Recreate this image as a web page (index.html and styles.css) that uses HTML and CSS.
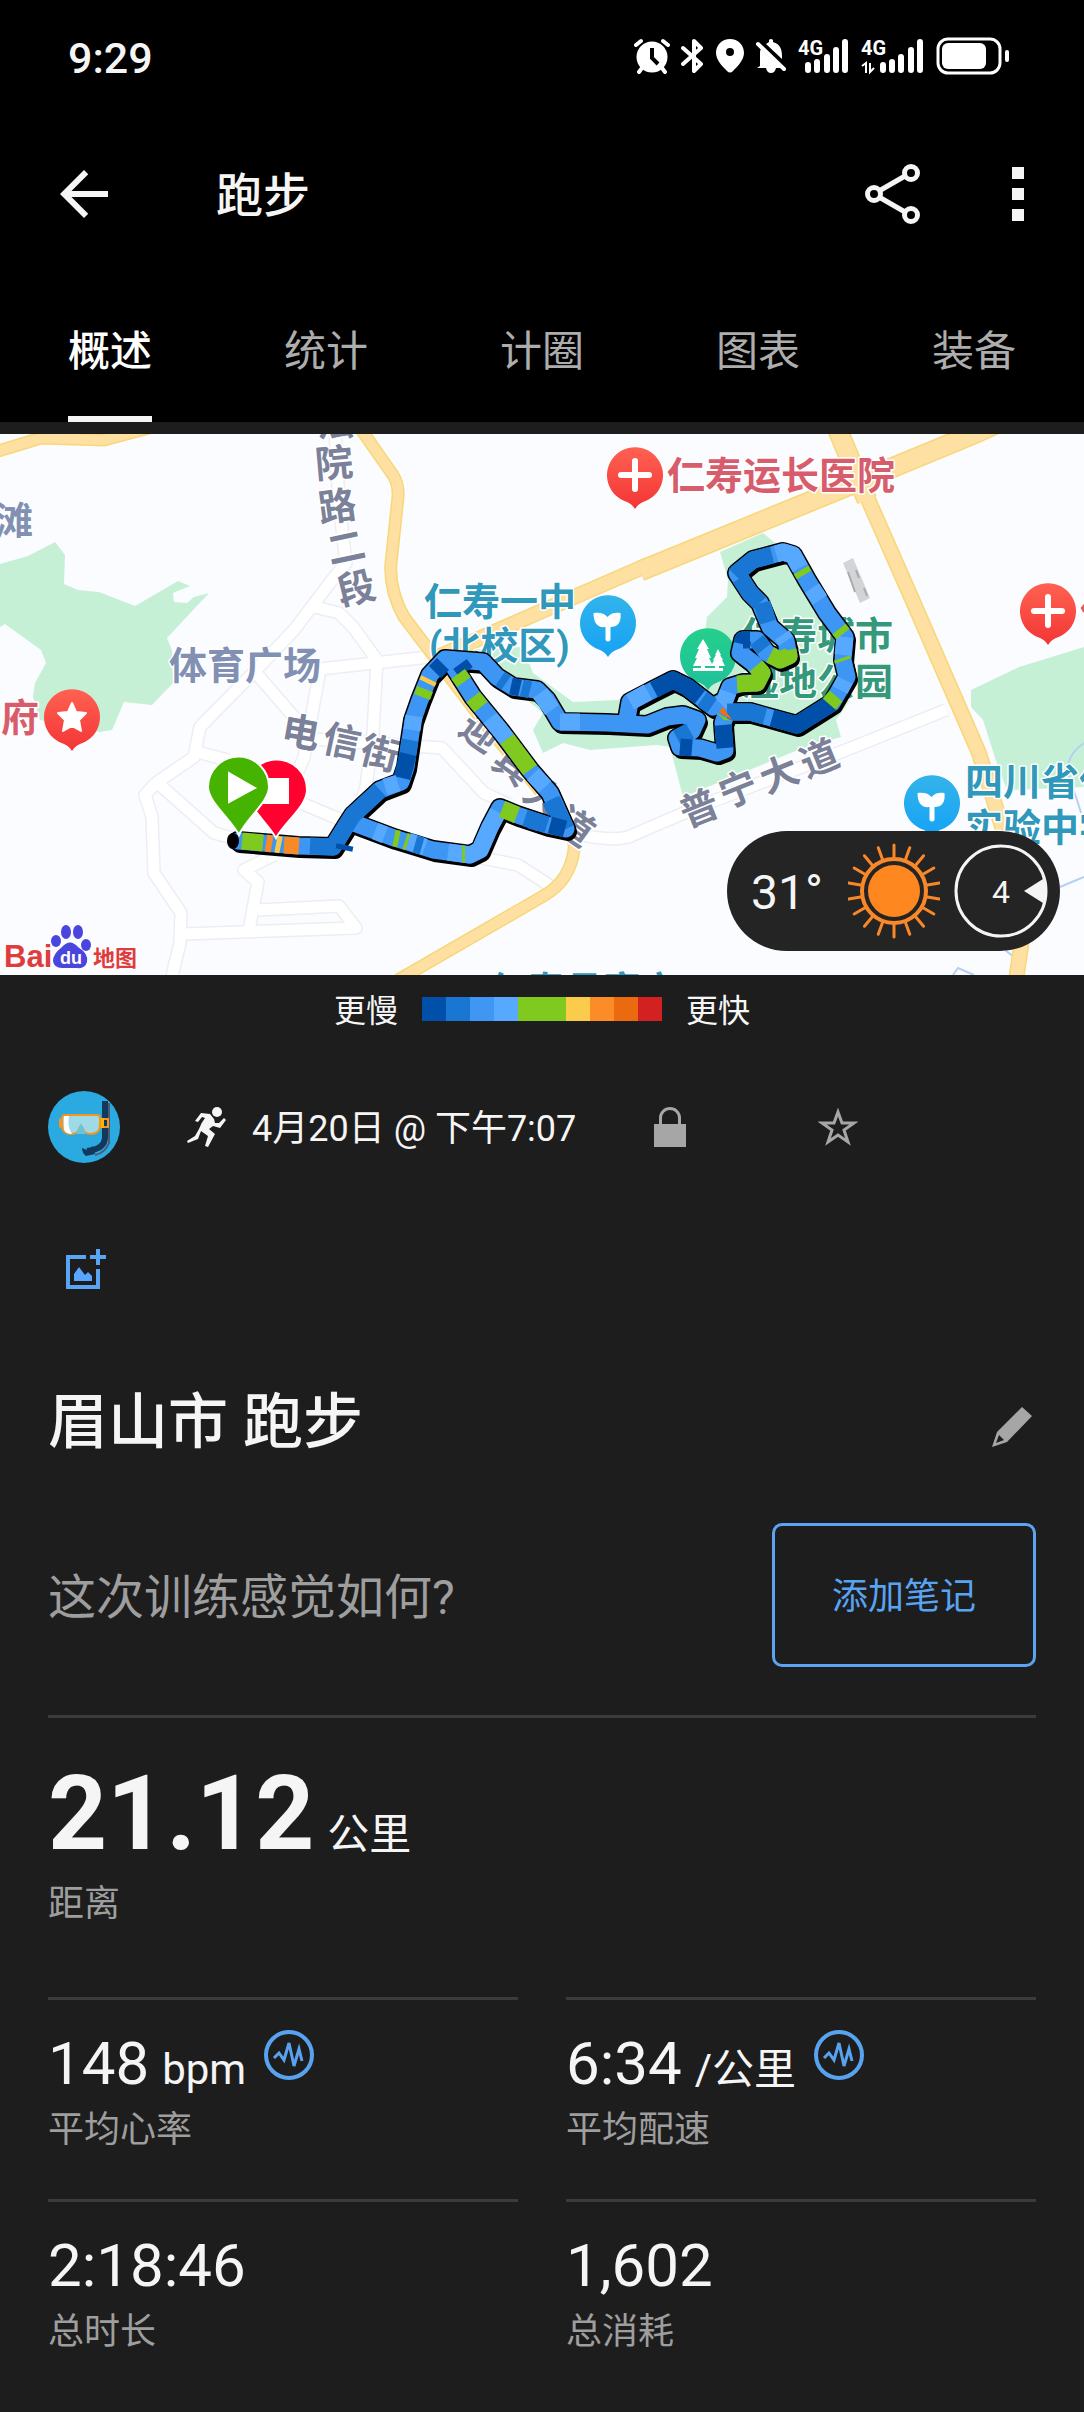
FILE: index.html
```html
<!DOCTYPE html>
<html lang="zh-CN">
<head>
<meta charset="utf-8">
<meta name="viewport" content="width=device-width, initial-scale=1">
<title>跑步</title>
<link rel="stylesheet" href="styles.css">
</head>
<body>
<div class="top">
  <div class="status-bar">
    <span class="clock">9:29</span>
    <div class="status-icons">
      <svg width="36" height="36" viewBox="0 0 36 36"><g fill="none" stroke="#fff" stroke-width="4" stroke-linecap="round"><path d="M2 7l5-4M34 7l-5-4M8 30l-3 4M28 30l3 4"/></g><circle cx="18" cy="19" r="15.500" fill="#fff"/><path d="M18 10v10l6 6" fill="none" stroke="#000" stroke-width="4"/></svg>
      <svg width="24" height="36" viewBox="0 0 24 36"><path d="M2 10l18 16-7 7V3l7 7L2 26" fill="none" stroke="#fff" stroke-width="4" stroke-linejoin="round" stroke-linecap="round"/></svg>
      <svg width="28" height="36" viewBox="0 0 28 36"><path fill="#fff" fill-rule="evenodd" d="M14 1C6 1 0 7 0 15c0 7 7 14 11 18q3 3 6 0c4-4 11-11 11-18C28 7 22 1 14 1zm0 9a4 4 0 110 8 4 4 0 010-8z"/></svg>
      <svg width="32" height="36" viewBox="0 0 32 36"><path fill="#fff" d="M5 28V16c0-2 0-4 1-5l19 18v1H2zM11 30h10q-1 5-5 5t-5-5zM11 6l3-2V2q2-2 4 0v2c7 2 9 7 9 14v3z"/><path d="M3 6l26 25" stroke="#fff" stroke-width="4" stroke-linecap="round"/></svg>
      <svg width="52" height="48" viewBox="0 -6 52 48"><text class="net" x="0" y="17">4G</text><path class="bars" d="M10 27v5M19 24v8M29 19v13M38 12v20M47 4v28"/></svg>
      <svg width="64" height="48" viewBox="0 -6 64 48"><text class="net" x="0" y="17">4G</text><path d="M1 28l4-3v10M9 25v9l4-4" fill="none" stroke="#fff" stroke-width="2"/><path class="bars" d="M22 27v5M31 24v8M40 19v13M50 12v20M59 4v28"/></svg>
      <svg width="74" height="38" viewBox="0 0 74 38"><rect x="2" y="2" width="62" height="34" rx="10" fill="none" stroke="#fff" stroke-width="3"/><rect x="6" y="6" width="44" height="26" rx="6" fill="#fff"/><rect x="69" y="13" width="4" height="12" rx="2" fill="#fff"/></svg>
    </div>
  </div>
  <header class="app-bar">
    <button class="icon-button" type="button" aria-label="返回"><svg width="72" height="72" viewBox="0 0 24 24"><path fill="#f5f5f5" d="M20 11H7.830l5.590-5.590L12 4l-8 8 8 8 1.410-1.410L7.830 13H20z"/></svg></button>
    <h1>跑步</h1>
    <button class="icon-button" type="button" aria-label="分享"><svg width="62" height="62" viewBox="0 0 62 62"><g fill="none" stroke="#f5f5f5" stroke-width="5"><path d="M17 28L43 13M17 34l26 15"/><circle cx="49" cy="10" r="6.500"/><circle cx="12" cy="31" r="6.500"/><circle cx="49" cy="52" r="6.500"/></g></svg></button>
    <button class="icon-button more" type="button" aria-label="更多"><svg width="12" height="54" viewBox="0 0 12 54"><path fill="#f5f5f5" d="M0 0h12v12H0zM0 21h12v12H0zM0 42h12v12H0z"/></svg></button>
  </header>
  <nav class="tabs">
    <a class="tab active" href="#overview" aria-current="page">概述</a>
    <a class="tab" href="#stats">统计</a>
    <a class="tab" href="#laps">计圈</a>
    <a class="tab" href="#charts">图表</a>
    <a class="tab" href="#gear">装备</a>
  </nav>
</div>

<main id="overview">
  <section class="map" aria-label="路线地图">
    <svg class="map-canvas" viewBox="0 434 1084 541">
      <defs>
        <linearGradient id="red" x1="0" y1="0" x2="0" y2="1"><stop offset="0" stop-color="#ff6152"/><stop offset="1" stop-color="#f33535"/></linearGradient>
        <linearGradient id="blue" x1="0" y1="0" x2="0" y2="1"><stop offset="0" stop-color="#33b3ea"/><stop offset="1" stop-color="#15a3f5"/></linearGradient>
        <linearGradient id="green" x1="0" y1="0" x2="0" y2="1"><stop offset="0" stop-color="#25cf8c"/><stop offset="1" stop-color="#1fc09a"/></linearGradient>
        <path id="pin" d="M0 34q-3-5-8-7A28 28 0 1 1 8 27q-5 2-8 7z"/>
        <path id="sprout" d="M-2.500 17V4c-8 1-12-4-12-14 6-1 11 0 14 4 3-4 8-5 13-4 1 10-3 14-10 14v13q-2.500 3-5 0z" fill="#fff"/>
        <path id="cross" d="M0-14V14M-14 0H14" stroke="#fff" stroke-width="6" stroke-linecap="round"/>
        <!-- local streets -->
        <g id="streets">
          <path d="M335 430L339 503 346 563 332 580 294 630 256 670 200 727 194 757 156 783 145 795 152 817 154 873 181 913 180 943 171 980"/>
          <path d="M315 607L339 613 353 627 377 660M320 669L429 657M320 670L304 757 290 790M377 660L373 733 366 787 358 812"/>
          <path d="M256 673L294 717M197 752L228 760M160 785L214 833 240 840M301 803L346 822M300 738L442 748 484 793 510 805"/>
          <path d="M274 855L244 870 258 882 249 930M258 910L339 906 356 928 184 934M477 857L518 865 552 887"/>
          <path d="M573 833Q610 842 628 837L698 807 846 750 946 710"/>
        </g>
        <!-- main roads -->
        <path id="main-a" d="M-5 452L41 438 104 440 149 428M360 428L393 475Q399 485 398 497L391 563Q389 590 404 617L429 650 490 730 560 815Q576 835 574 850 570 880 545 895L398 980"/>
        <path id="main-b" d="M440 656L542 611 650 564M867 497L908 590 979 753 1002 827Q1024 900 1021 947L1016 980"/>
        <path id="main-c" d="M640 571L694 549 843 488 974 434 1000 422M837 428L867 500"/>
        <!-- recorded track -->
        <g id="track">
          <path d="M238 841L298 846 333 847 346 826 353 815 380 790 401 782 406 767 413 720 420 700 430 675 445 659 483 662 497 677 513 687 537 690 547 700 560 722 607 723 647 725 667 717 683 715 697 720 692 731 677 738 680 747 700 748 717 753 725 750 723 723 727 712"/>
          <path d="M627 719L630 702 653 690 673 680 687 687 713 707 725 700 730 687 743 683 757 683 762 673 753 663 740 653 743 640 757 640 767 653 780 660 789 656 786 641 770 627 760 603 750 593 737 573 753 560 783 552 793 555 807 580 827 613 845 637 843 660 847 677 832 703 797 725 750 712 727 712"/>
          <path d="M452 664L473 697 500 730 530 770 550 793 566 829 547 825 517 815 500 808 490 827 480 850 470 855 433 850 394 838 354 823"/>
        </g>
      </defs>
      <rect y="434" width="1084" height="541" fill="#fbfcff"/>
      <g fill="#c6f0d6">
        <path d="M0 564L28 556 55 542 65 555 64 584 78 590 99 592 135 606 178 581 190 586 173 593 174 602 187 603 194 597 209 593 167 638 172 650 173 683 152 705 124 702 112 730 100 732 40 720 33 697 35 683 46 663 41 650 5 624 0 627z"/>
        <path d="M720 552L763 533 780 547 850 640 850 700 836 720 841 737 798 750 683 797 670 747 657 745 590 750 563 743 543 753 533 730 543 713 527 700 500 690 460 650 523 647 533 673 573 702 617 700 683 687 700 670 707 617 727 597 728 580z"/>
        <path d="M1084 647L1019 667 971 690 971 707 983 720 998 767 1007 790 1084 787z"/>
      </g>
      <path d="M1084 743Q1062 758 1070 780T1081 813M1060 887L1084 877M953 975L958 968 974 975M1005 950L1014 957" fill="none" stroke="#b4d0f0" stroke-width="2"/>
      <use href="#streets" fill="none" stroke="#eceef2" stroke-width="14" stroke-linejoin="round"/>
      <use href="#streets" fill="none" stroke="#fff" stroke-width="11" stroke-linejoin="round"/>
      <g fill="none" stroke="#f8d778"><use href="#main-a" stroke-width="13"/><use href="#main-b" stroke-width="16"/><use href="#main-c" stroke-width="21"/></g>
      <g fill="none" stroke="#fde0a2"><use href="#main-a" stroke-width="10"/><use href="#main-b" stroke-width="13"/><use href="#main-c" stroke-width="18"/></g>
      <path d="M843 563L853 558 870 598 860 603z" fill="#d3d4d6"/><path d="M856 570l3 8M848 572l7 20M864 588l3 8" stroke="#a9aaad" stroke-width="2"/>

      <g class="road-label">
        <text transform="translate(335 422) rotate(-3)" y="14">法</text>
        <text transform="translate(334 463) rotate(-5)" y="14">院</text>
        <text transform="translate(337 506) rotate(-8)" y="14">路</text>
        <text transform="translate(346 547) rotate(-12)" y="14">二</text>
        <text transform="translate(356 588) rotate(-14)" y="14">段</text>
        <text transform="translate(301 732) rotate(10)" y="14">电</text>
        <text transform="translate(342 741) rotate(12)" y="14">信</text>
        <text transform="translate(380 753) rotate(14)" y="14">街</text>
        <text transform="translate(480 732) rotate(36)" y="14">迎</text>
        <text transform="translate(513 765) rotate(36)" y="14">宾</text>
        <text transform="translate(544 797) rotate(36)" y="14">大</text>
        <text transform="translate(575 826) rotate(36)" y="14">道</text>
        <text transform="translate(699 808) rotate(-22)" y="14">普</text>
        <text transform="translate(738 789) rotate(-22)" y="14">宁</text>
        <text transform="translate(779 774) rotate(-22)" y="14">大</text>
        <text transform="translate(819 758) rotate(-22)" y="14">道</text>
      </g>
      <g class="place">
        <text class="district" x="-5" y="534">滩</text>
        <text class="district" x="169" y="679">体育广场</text>
        <text class="hospital" x="667" y="489">仁寿运长医院</text>
        <text class="hospital" x="1080" y="625">仁</text>
        <text class="hospital" x="-37" y="731">政府</text>
        <text class="school" x="424" y="615">仁寿一中</text>
        <text class="school" x="429" y="659">(北校区)</text>
        <text class="school" x="965" y="795">四川省仁</text>
        <text class="school" x="965" y="841">实验中学</text>
        <text class="school" x="489" y="1004">仁寿县富市</text>
        <text class="park" x="741" y="649">仁寿城市</text>
        <text class="park" x="741" y="695">湿地公园</text>
      </g>
      <g transform="translate(635 475)"><use href="#pin" fill="url(#red)"/><use href="#cross"/></g>
      <g transform="translate(1048 611)"><use href="#pin" fill="url(#red)"/><use href="#cross"/></g>
      <g transform="translate(72 717)"><use href="#pin" fill="url(#red)"/><path fill="#fff" stroke="#fff" stroke-width="2" stroke-linejoin="round" d="M0-14L4-5 14-4 7 3 9 14 0 9-9 14-7 3-14-4-4-5z"/></g>
      <g transform="translate(608 623)"><use href="#pin" fill="url(#blue)"/><use href="#sprout"/></g>
      <g transform="translate(932 803)"><use href="#pin" fill="url(#blue)"/><use href="#sprout"/></g>
      <g transform="translate(708 656)"><use href="#pin" fill="url(#green)"/><path fill="#fff" d="M-5-17L1-7H-1L3 2H1L5 10H-3V12H7V10H3L6 4H5L8-1H7L10-7 13-1H12L15 4H14L17 10H11V12H15V15H-15V12H-7V10H-15L-11 2H-13L-9-7H-11z"/></g>

      <use href="#track" class="casing" stroke-width="20"/>
      <use href="#track" class="shadow" stroke-width="18" transform="translate(2 3)"/>
      <use href="#track" class="pace" stroke="#3d95f4" stroke-width="17"/>
      <g class="pace-parts">
        <path class="p2" d="M310 846L333 847 346 826 353 815 380 790M405 770L410 740M735 575L737 573 753 560 772 555M760 603L750 593 740 578M768 622L762 603M566 829L552 800M547 825L525 818M690 731L677 738M757 640L764 649"/>
        <path class="p1" d="M402 778L408 754M435 672L443 664M460 664L466 672M654 690L673 680 687 687 700 697M680 747L692 748M723 725L725 748M742 644L743 640 750 640M832 703L797 725 772 718M565 829L550 825M511 686L520 688M345 845L344 850"/>
        <path class="p3" d="M385 787L398 783M412 730L414 716M540 693L552 710M560 722L580 722M630 702L648 692M776 554L783 552 793 555 800 568M812 588L820 600M845 637L843 655M845 680L840 690M786 641L782 635M490 718L507 739M533 774L545 787M498 812L490 827 480 850 470 855 448 852M385 835L375 831M721 704L725 700 728 692M408 841L425 847"/>
        <path class="p2" d="M500 679L506 683M522 688L530 690M727 712L750 712 765 716M712 706L702 699M415 844L422 846M540 823L530 820M550 800L556 812"/>
        <path class="pg" d="M242 841L263 843M422 697L425 689M458 674L464 682M473 697L481 707M507 739L530 770M502 809L517 815M737 684L757 683 762 673 756 666M770 655L780 660 789 656 788 650M801 570L804 575M839 629L843 634M842 658L843 661M836 696L829 704M394 838L399 839M405 841L408 842M462 854L465 854"/>
        <path class="py" d="M427 683L429 679M276 844L281 845"/>
        <path class="po" d="M266 843L272 844M284 845L299 846"/>
      </g>
      <path d="M719 712L723 707 732 720z" fill="#f06f12"/><path d="M717 713L732 721 724 720z" fill="#80c91f"/>
      <ellipse cx="233" cy="841" rx="6" ry="8"/>
      <g stroke="#fff" stroke-width="2">
        <path fill="#ff0230" d="M276 838C268 823 246 806 246 790a30 30 0 1 1 61 0C307 806 284 823 276 838z"/>
        <path fill="#fff" d="M263 779h25v24h-25z"/>
        <path fill="#45b300" d="M239 835C231 819 208 802 208 787a30 30 0 1 1 61 0C269 802 246 819 239 835z"/>
        <path fill="#fff" d="M229 773L255 788 229 802z"/>
      </g>
      <g class="brand">
        <text x="4" y="967" font-size="31">Bai</text>
        <g fill="#4a45dc"><ellipse cx="56" cy="941" rx="5" ry="6"/><ellipse cx="66" cy="932" rx="5" ry="7"/><ellipse cx="78" cy="932" rx="5" ry="7"/><ellipse cx="86" cy="945" rx="5" ry="6"/><path d="M62 947q8-9 16 0 11 7 9 15-2 7-10 6H62q-8 0-9-7 0-7 9-14z"/></g>
        <text class="du" x="60" y="964" font-size="18">du</text>
        <text class="brand-cn" x="93" y="966" font-size="22">地图</text>
      </g>
    </svg>
    <div class="weather">
      <span class="temp">31°</span>
      <svg class="sun" width="92" height="96" viewBox="-46 -48 92 96"><circle r="26" fill="#ff871f"/><circle r="32" fill="none" stroke="#f98829" stroke-width="4"/><g stroke="#f98829" stroke-width="3" stroke-linecap="round"><path id="ray" d="M0-34V-46M0 34V46"/><use href="#ray" transform="rotate(20)"/><use href="#ray" transform="rotate(40)"/><use href="#ray" transform="rotate(60)"/><use href="#ray" transform="rotate(80)"/><use href="#ray" transform="rotate(100)"/><use href="#ray" transform="rotate(120)"/><use href="#ray" transform="rotate(140)"/><use href="#ray" transform="rotate(160)"/></g></svg>
      <svg width="94" height="94" viewBox="-47 -47 94 94"><circle r="45" fill="none" stroke="#f5f5f5" stroke-width="3"/><path fill="#f5f5f5" d="M23 0L42-12 46 0 42 12z"/><text class="wind" x="0" y="12">4</text></svg>
    </div>
  </section>

  <div class="legend">
    <span>更慢</span>
    <div class="scale"><i class="s1"></i><i class="s2"></i><i class="s3"></i><i class="s4"></i><i class="s5"></i><i class="s5"></i><i class="s6"></i><i class="s7"></i><i class="s8"></i><i class="s9"></i></div>
    <span>更快</span>
  </div>

  <div class="content">
    <div class="meta">
      <svg width="72" height="72" viewBox="0 0 72 72"><circle cx="36" cy="36" r="36" fill="#2baae2"/><path d="M57 10v36q0 12-18 14" fill="none" stroke="#12395c" stroke-width="6"/><path d="M61 12v40q-4 10-14 12" fill="none" stroke="#4c5a70" stroke-width="2"/><path d="M34 57l5 2 6-4 2 8-9 2q-4-3-4-8z" fill="#12395c"/><path d="M50 28h10v8H50" fill="none" stroke="#f7941d" stroke-width="2"/><rect x="11" y="27" width="5" height="10" rx="2" fill="#f7941d"/><rect x="51" y="27" width="5" height="10" fill="#ffb400"/><path d="M17 24h32q3 0 3 4v6q0 9-10 9-5 0-7-5-1-3-2-3t-2 3q-2 5-7 5-10 0-10-9v-6q0-4 3-4z" fill="#9fdbe6" stroke="#f7941d" stroke-width="2"/><path d="M20 25h-4v14q2 4 8 4-5-7-3-18z" fill="#fff"/><path d="M33 32l-5 11h10z" fill="#68c5dc"/></svg>
      <svg class="runner" width="40" height="42" viewBox="0 0 40 42"><circle cx="31" cy="6" r="5" fill="#f5f5f5"/><path fill="#f5f5f5" d="M15 7L24 8 28 13 29 17 33 17 38 12 40 14 34 22 27 20 23 23 29 28 22 41 19 40 22 30 15 25 12 33 2 37 1 35 9 30 13 23Q15 17 19 12L16 11 12 16 9 15z"/></svg>
      <span class="date">4月20日 @ 下午7:07</span>
      <svg class="lock" width="32" height="40" viewBox="0 0 32 40"><path fill="#a6a6a6" d="M0 17h5v-6a11 11 0 0122 0v6h5v23H0zM8 17h16v-6a8 8 0 00-16 0z" fill-rule="evenodd"/></svg>
      <button class="icon-button" type="button" aria-label="收藏"><svg width="40" height="40" viewBox="0 0 40 40"><path d="M20 5L24 16H36L26 23 30 35 20 28 10 35 14 23 4 16H16z" fill="none" stroke="#a6a6a6" stroke-width="3"/></svg></button>
    </div>

    <button class="icon-button add-photo" type="button" aria-label="添加照片"><svg width="40" height="40" viewBox="0 0 40 40"><path fill="none" stroke="#58a5f5" stroke-width="4" d="M20 8H2V38H32V20M32 0V16M24 8H40"/><path fill="#58a6ff" d="M8 32V25L13 18 19 26 22 23 26 27V32z"/></svg></button>

    <div class="title-row">
      <h2>眉山市 跑步</h2>
      <button class="icon-button" type="button" aria-label="编辑"><svg width="42" height="42" viewBox="0 0 42 42"><path fill="#a6a6a6" fill-rule="evenodd" d="M31 1L41 10 16 36 1 41 6 26zM8 29L5 37 13 34z"/></svg></button>
    </div>

    <div class="feel-row">
      <p>这次训练感觉如何?</p>
      <button class="note" type="button">添加笔记</button>
    </div>

    <div class="distance">
      <div class="distance-value">21.12<span class="unit">公里</span></div>
      <div class="label">距离</div>
    </div>

    <div class="stats">
      <div class="stat">
        <div class="value">148<span class="unit">bpm</span><svg class="pulse" width="50" height="50" viewBox="0 0 50 50"><circle cx="25" cy="25" r="23" fill="none" stroke="#58a3ef" stroke-width="4"/><path id="wave" d="M10 28L15 23 20 30 25 13 30 36 35 19 38 31" fill="none" stroke="#58a3ef" stroke-width="3"/></svg></div>
        <div class="label">平均心率</div>
      </div>
      <div class="stat">
        <div class="value">6:34<span class="unit">/公里</span><svg class="pulse" width="50" height="50" viewBox="0 0 50 50"><circle cx="25" cy="25" r="23" fill="none" stroke="#58a3ef" stroke-width="4"/><use href="#wave"/></svg></div>
        <div class="label">平均配速</div>
      </div>
      <div class="stat">
        <div class="value">2:18:46</div>
        <div class="label">总时长</div>
      </div>
      <div class="stat">
        <div class="value">1,602</div>
        <div class="label">总消耗</div>
      </div>
    </div>
  </div>
</main>
</body>
</html>
```
FILE: styles.css
```css
* { box-sizing: border-box; }

body {
  margin: 0;
  background: #1d1d1d;
  color: #f5f5f5;
  font-family: Roboto, "Noto Sans CJK SC", sans-serif;
}

h1, h2, p { margin: 0; }
svg { display: block; flex: none; }

.icon-button {
  display: block;
  padding: 0;
  border: 0;
  background: none;
}

/* Status bar, title bar and tabs */
.top { background: #000; }

.status-bar {
  display: flex;
  align-items: center;
  justify-content: space-between;
  height: 112px;
  padding: 0 74px 0 68px;
}

.clock { padding-top: 3px; font-size: 43px; font-weight: 500; line-height: 48px; }

.status-icons { display: flex; align-items: center; gap: 11px; }
.net { font-size: 20px; font-weight: 700; fill: #fff; }
.bars { fill: none; stroke: #fff; stroke-width: 6px; stroke-linecap: round; }

.app-bar {
  display: flex;
  align-items: center;
  height: 160px;
  padding: 4px 60px 0 48px;
}

.app-bar h1 {
  flex: 1;
  margin-left: 96px;
  padding-top: 4px;
  font-size: 47px;
  font-weight: 500;
  line-height: 72px;
}

.more { margin-left: 88px; }

.tabs {
  display: flex;
  height: 150px;
  padding: 0 2px;
}

.tab {
  position: relative;
  flex: 1;
  padding-top: 50px;
  color: #adadad;
  font-size: 42px;
  line-height: 60px;
  text-align: center;
  text-decoration: none;
}

.tab.active { color: #fff; font-weight: 500; }

.tab.active::after {
  content: "";
  position: absolute;
  bottom: 0;
  left: 50%;
  width: 84px;
  height: 6px;
  margin-left: -42px;
  background: #f5f5f5;
}

/* Map */
.map { position: relative; margin-top: 12px; }
.map-canvas { width: 100%; height: auto; }

.road-label { fill: #7a8199; text-anchor: middle; }
.road-label, .place {
  font-size: 38px;
  font-weight: 700;
  stroke: #fff;
  stroke-width: 3px;
  stroke-linejoin: round;
  paint-order: stroke;
}
.district { fill: #8291b3; }
.hospital { fill: #d85d6c; }
.school { fill: #2f98bb; }
.park { fill: #34987a; }

.casing, .shadow, .pace { fill: none; stroke-linejoin: round; stroke-linecap: round; }
.casing, .shadow { stroke: #000; }
.pace-parts { fill: none; stroke-width: 17px; stroke-linejoin: round; }
.p1 { stroke: #004fa8; }
.p2 { stroke: #1976d2; }
.p3 { stroke: #57a8ff; }
.pg { stroke: #80c91f; }
.py { stroke: #fbc94a; }
.po { stroke: #f58a28; }

.brand { fill: #e03c3c; font-family: "Liberation Sans", sans-serif; font-weight: 700; }
.brand .du { fill: #fff; }
.brand .brand-cn { font-family: "Noto Sans CJK SC", sans-serif; }

.weather {
  position: absolute;
  right: 24px;
  bottom: 24px;
  display: flex;
  align-items: center;
  width: 333px;
  height: 120px;
  padding: 0 12px 0 24px;
  border-radius: 60px;
  background: #242424;
}

.temp { padding-top: 4px; font-size: 48px; line-height: 56px; }
.sun { margin: 0 14px 0 auto; }
.wind { fill: #f5f5f5; font-size: 32px; text-anchor: middle; }

.legend {
  display: flex;
  align-items: center;
  justify-content: center;
  gap: 24px;
  height: 68px;
  font-size: 32px;
  line-height: 48px;
}

.legend span { padding-top: 3px; }

.scale { display: flex; }
.scale i { width: 24px; height: 24px; }
.s1 { background: #004fa8; }
.s2 { background: #1976d2; }
.s3 { background: #3f97f3; }
.s4 { background: #57a8ff; }
.s5 { background: #80c91f; }
.s6 { background: #fbcb4c; }
.s7 { background: #fb8c28; }
.s8 { background: #eb6a10; }
.s9 { background: #d32121; }

/* Activity details */
.content { padding: 48px; }

.meta { display: flex; align-items: center; height: 72px; }
.runner { margin-left: 66px; }
.date { margin-left: 26px; padding-top: 4px; font-size: 36px; line-height: 48px; }
.lock { margin: 0 132px 0 78px; }

.add-photo { margin: 86px 18px 0; }

.title-row {
  display: flex;
  align-items: center;
  justify-content: space-between;
  height: 84px;
  margin-top: 96px;
  padding-right: 3px;
}

.title-row h2 { padding-bottom: 8px; font-size: 60px; font-weight: 500; line-height: 72px; }

.feel-row {
  display: flex;
  align-items: center;
  justify-content: space-between;
  margin-top: 54px;
}

.feel-row p { padding-top: 5px; color: #9e9e9e; font-size: 48px; line-height: 72px; }

.note {
  width: 264px;
  height: 144px;
  padding: 0 0 4px;
  border: 3px solid #5ba4f2;
  border-radius: 10px;
  background: none;
  color: #58a3f2;
  font: inherit;
  font-size: 36px;
}

.distance {
  height: 282px;
  margin-top: 48px;
  padding-top: 36px;
  border-top: 3px solid #3b3b3b;
}

.distance-value { font-size: 103px; font-weight: 700; line-height: 120px; }
.unit { margin-left: 13px; font-size: 42px; font-weight: 400; line-height: 60px; }

.label {
  margin-top: 6px;
  color: #9e9e9e;
  font-size: 36px;
  line-height: 48px;
}

.stats {
  display: grid;
  grid-template-columns: 1fr 1fr;
  column-gap: 48px;
}

.stat { height: 202px; padding-top: 28px; border-top: 3px solid #3b3b3b; }

.value {
  display: flex;
  align-items: baseline;
  height: 72px;
  font-size: 60px;
  line-height: 72px;
}

.pulse { align-self: flex-start; margin: 2px 0 0 18px; }
```
